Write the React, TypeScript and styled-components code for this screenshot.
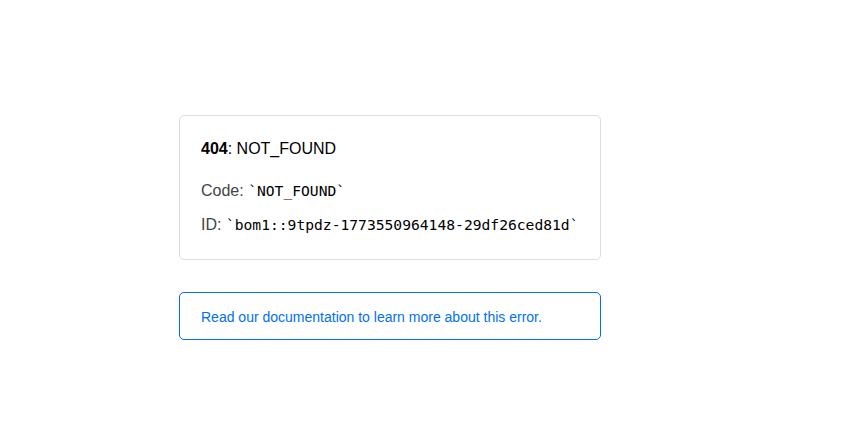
import React from "react";
import styled, { createGlobalStyle } from "styled-components";

const Global = createGlobalStyle`
  html, body { margin: 0; padding: 0; background: #fff; }
  body { font-family: "Liberation Sans", Arial, sans-serif; color: #000; }
`;

const Page = styled.main`
  padding: 115px 0 0 179px;
  width: 422px;
`;

const Card = styled.section`
  border: 1px solid #dedede;
  border-radius: 5px;
  padding: 22px 21px 23px 21px;
  display: flex;
  flex-direction: column;
`;

const Heading = styled.h1`
  margin: 0 0 20px 0;
  font-size: 16px;
  font-weight: 400;
  line-height: 22px;
  color: #000;
`;

const Strong = styled.strong`
  font-weight: 700;
`;

const Line = styled.p<{ $gap?: number }>`
  margin: 0 0 ${(p) => p.$gap ?? 0}px 0;
  font-size: 16px;
  line-height: 22px;
  color: #444;
`;

const Code = styled.code`
  font-family: "DejaVu Sans Mono", "Liberation Mono", monospace;
  font-size: 14.65px;
  color: #000;
`;

const DocBox = styled.a`
  display: block;
  margin-top: 32px;
  border: 1px solid #0070f3;
  border-radius: 5px;
  padding: 16px 21px 13px 21px;
  font-size: 14px;
  line-height: 17px;
  color: #0070f3;
  text-decoration: none;
`;

export default function App() {
  return (
    <>
      <Global />
      <Page>
        <Card>
          <Heading>
            <Strong>404</Strong>: NOT_FOUND
          </Heading>
          <Line $gap={12}>
            Code: <Code>`NOT_FOUND`</Code>
          </Line>
          <Line>
            ID: <Code>`bom1::9tpdz-1773550964148-29df26ced81d`</Code>
          </Line>
        </Card>
        <DocBox href="#">Read our documentation to learn more about this error.</DocBox>
      </Page>
    </>
  );
}
